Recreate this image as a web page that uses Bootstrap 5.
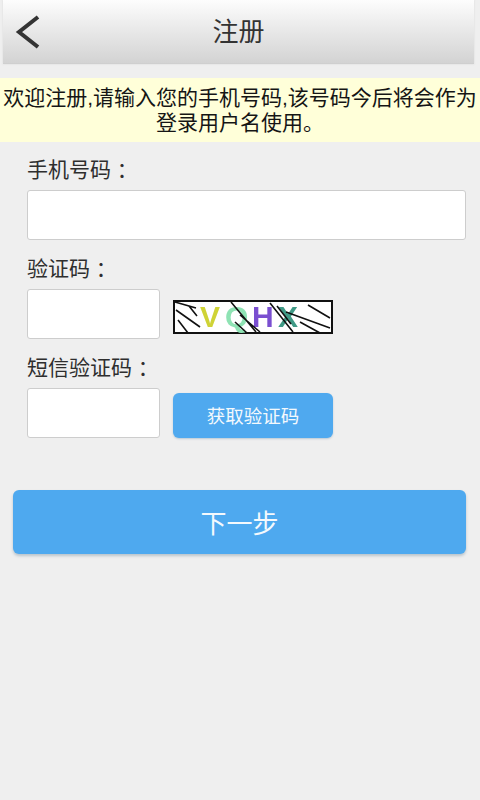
<!DOCTYPE html>
<html lang="zh-CN">
<head>
<meta charset="utf-8">
<title>注册</title>
<link rel="stylesheet" href="https://cdn.jsdelivr.net/npm/bootstrap@5.3.0/dist/css/bootstrap.min.css">
<style>
html,body{height:100%}
body{background:#efefef;font-family:"Liberation Sans","Noto Sans CJK SC",sans-serif;color:#2b2b2b}
.page-shell{height:800px;overflow:hidden}
.head-bar{height:64px;margin:0 6px 0 3px;background:linear-gradient(#fdfdfd 0,#f2f2f2 25%,#d3d3d3 100%);border-bottom:1px solid #cfcfcf;box-shadow:0 0 2px #d8d8d8}
.back-link{left:12px;top:15px;width:28px;height:34px;line-height:0}
.head-title{font-size:26px;color:#333;line-height:64px}
.notice-strip{margin-top:14px;height:64px;background:#ffffd9;font-size:21px;line-height:25px;color:#151515;padding-top:7px;white-space:nowrap}
.form-zone{padding:14px 14px 0 27px}
.field-label{font-size:21px;line-height:28px;color:#2e2e2e;margin-bottom:6px;display:block}
.field-box{height:50px;border:1px solid #cdcdcd;border-radius:3px;background:#fff;box-shadow:none}
.field-short{width:133px;flex:none}
.field-row{margin-bottom:15px}
.pair-row{gap:13px}
.captcha-pic{width:160px;height:34px;margin-top:11px;flex:none;display:block;filter:blur(.35px)}
.code-btn{width:160px;height:45px;margin-top:5px;background:#4fa9ef;border:0;border-radius:6px;color:#f4f9fd;font-size:18.5px;box-shadow:0 1px 2px #b9c9d6;padding:2px 0 0}
.next-zone{padding:52px 14px 0 13px}
.next-btn{height:64px;background:#4ea9ef;border:0;border-radius:6px;color:#f4f9fd;font-size:26px;box-shadow:0 2px 3px #b9c4cc;padding:4px 0 0}
</style>
</head>
<body>
<div class="page-shell">
  <div class="head-bar position-relative text-center">
    <a class="back-link position-absolute" href="#" aria-label="返回">
      <svg width="28" height="34" viewBox="0 0 28 34"><path d="M23 2 L4 17 L23 32" fill="none" stroke="#333" stroke-width="4"/></svg>
    </a>
    <div class="head-title">注册</div>
  </div>
  <div class="notice-strip text-center">欢迎注册,请输入您的手机号码,该号码今后将会作为<br>登录用户名使用。</div>
  <form class="form-zone">
    <label class="field-label">手机号码 ：</label>
    <input class="form-control field-box field-row" type="text">
    <label class="field-label">验证码 ：</label>
    <div class="d-flex pair-row field-row">
      <input class="form-control field-box field-short" type="text">
      <svg class="captcha-pic" viewBox="0 0 160 34">
        <rect x="1" y="1" width="158" height="32" fill="#fff" stroke="#111" stroke-width="2"/>
        <g font-family="Liberation Sans" font-size="30" font-weight="bold">
          <text x="27" y="27" fill="#cfd336">V</text>
          <text x="52" y="27" fill="#8fe3b4">Q</text>
          <text x="79" y="27" fill="#7a4fd0">H</text>
          <text x="105" y="27" fill="#3f9a86">X</text>
        </g>
        <g fill="none" stroke="#111" stroke-width="1.6">
          <path d="M2 2 L23 8M3 10 L27 27M5 20 L15 33M16 6 L24 16M58 2 L83 32M67 15 L87 32M62 22 L74 33M97 3 L120 32M113 12 L157 28M135 5 L157 18M127 22 L147 33M104 6 L118 24"/>
        </g>
      </svg>
    </div>
    <label class="field-label">短信验证码 ：</label>
    <div class="d-flex pair-row">
      <input class="form-control field-box field-short" type="text">
      <button class="btn code-btn" type="button">获取验证码</button>
    </div>
  </form>
  <div class="next-zone"><button class="btn next-btn w-100" type="button">下一步</button></div>
</div>
<script src="https://cdn.jsdelivr.net/npm/bootstrap@5.3.0/dist/js/bootstrap.bundle.min.js"></script>
</body>
</html>
